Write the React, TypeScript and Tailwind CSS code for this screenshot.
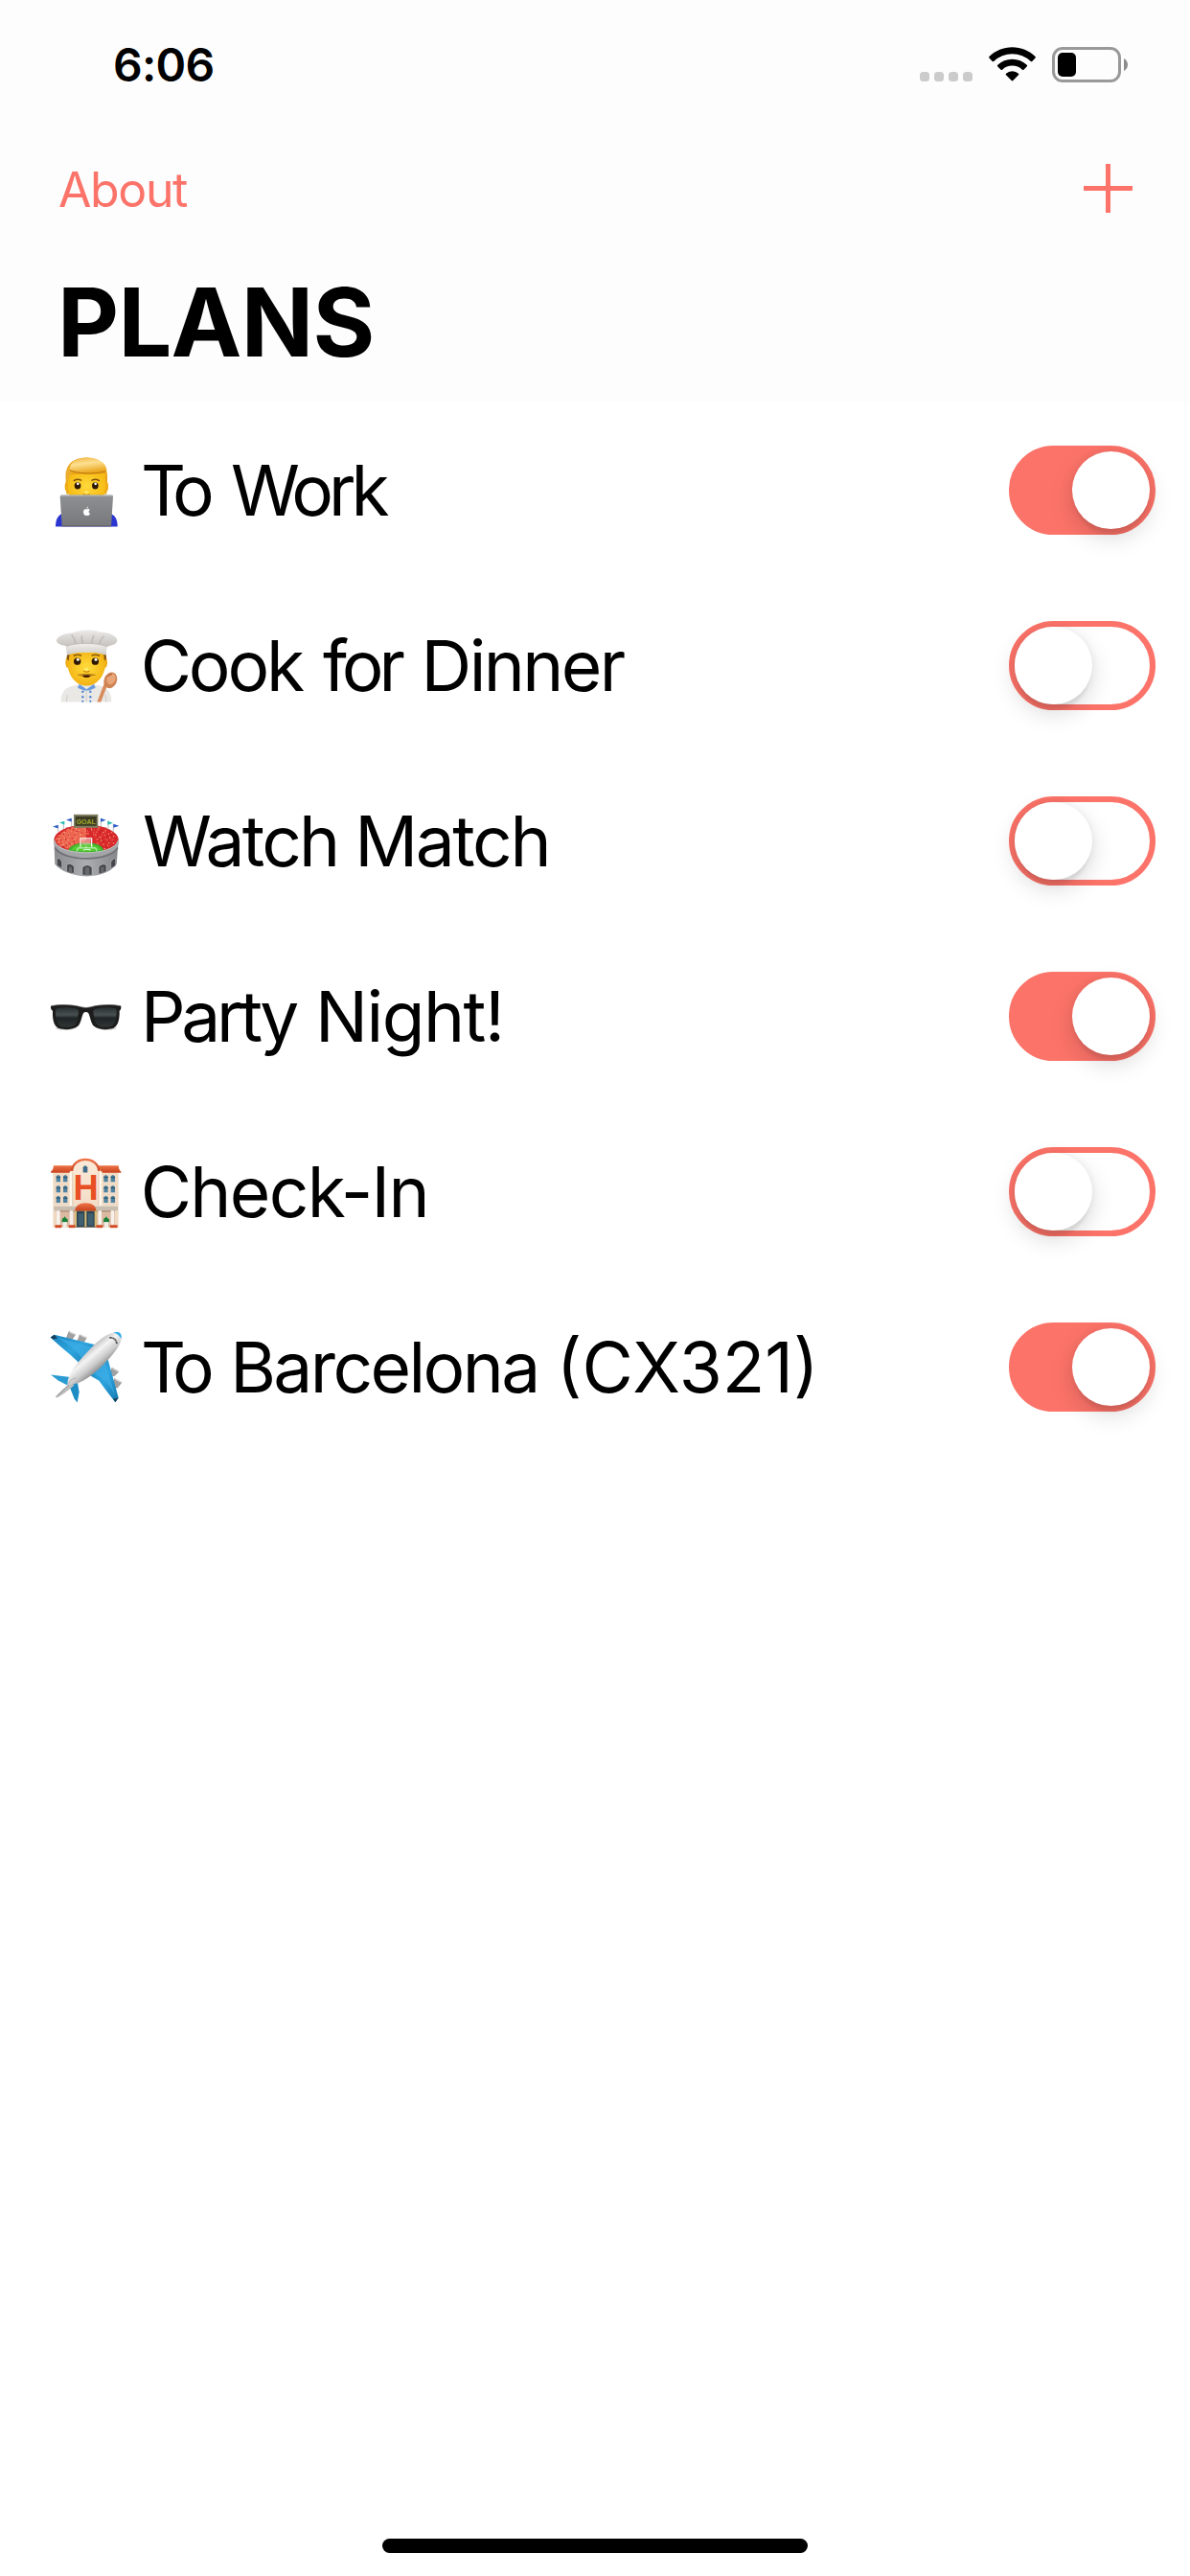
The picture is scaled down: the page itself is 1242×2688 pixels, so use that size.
import React from "react";

function Technologist() {
  return (
    <svg viewBox="60 64.5 240 240" className="size-20 shrink-0">
      <defs>
        <linearGradient id="hair" x1="0" y1="0" x2="0.3" y2="1">
          <stop offset="0" stopColor="#f0b13a" />
          <stop offset="0.45" stopColor="#fde091" />
          <stop offset="1" stopColor="#eaa51b" />
        </linearGradient>
        <radialGradient id="face1" cx="0.5" cy="0.4" r="0.6">
          <stop offset="0" stopColor="#ffd93b" />
          <stop offset="1" stopColor="#f6b70f" />
        </radialGradient>
        <linearGradient id="laptop" x1="0" y1="0" x2="0" y2="1">
          <stop offset="0" stopColor="#8f9092" />
          <stop offset="1" stopColor="#77787b" />
        </linearGradient>
      </defs>
      <path d="M84 297C84 274 92 260 108 256L254 256C270 260 278 275 278 297Z" fill="#2a36cf" />
      <path d="M116 150C113 110 130 82 181 81C232 82 249 110 246 150L244 195L118 195Z" fill="#e9a41a" />
      <ellipse cx="119" cy="172" rx="6" ry="15" fill="#f0ac15" />
      <ellipse cx="243" cy="172" rx="6" ry="15" fill="#f0ac15" />
      <path d="M123 135C150 130 215 135 240 130V178C238 215 210 230 181 230C150 230 125 215 123 178Z" fill="url(#face1)" />
      <path d="M127 121C128 96 149 82 181 81C221 82 243 98 244 121C230 129 205 133 181 131C157 130 140 125 127 121Z" fill="url(#hair)" />
      <path d="M119 160C117 130 120 108 132 99C128 110 126 120 135 126L125 145Z" fill="#edae2c" />
      <path d="M129 121C155 130 195 136 240 124" stroke="#b97208" strokeWidth="3" fill="none" />
      <path d="M142 153Q153 146 164 152M198 152Q209 146 220 153" stroke="#80500c" strokeWidth="4.5" fill="none" strokeLinecap="round" />
      <ellipse cx="153" cy="169" rx="10" ry="11" fill="#2e1804" />
      <ellipse cx="208" cy="169" rx="10" ry="11" fill="#2e1804" />
      <circle cx="154" cy="163" r="4" fill="#fff" />
      <circle cx="209" cy="163" r="4" fill="#fff" />
      <ellipse cx="181" cy="189" rx="8" ry="3" fill="#ffec7a" />
      <path d="M171 194Q181 200 191 194V199H171Z" fill="#a66a10" />
      <path d="M98 203Q98 198 104 198H259Q265 198 264 204L258 296H104Z" fill="url(#laptop)" />
      <path d="M99 200H264" stroke="#bfc0c2" strokeWidth="3" />
      <path d="M104 295H258" stroke="#626367" strokeWidth="3" />
      <path d="M181 243C184 240 190 241 191 245C186 248 187 254 192 256C190 262 187 264 181 262C176 264 172 260 171 252C171 244 175 240 181 243ZM181 241Q181 236 186 234Q187 239 181 241Z" fill="#fff" />
    </svg>
  );
}

function Cook() {
  return (
    <svg viewBox="60 73.5 240 240" className="size-20 shrink-0">
      <defs>
        <linearGradient id="hat" x1="0" y1="0" x2="0" y2="1">
          <stop offset="0" stopColor="#ebeae8" />
          <stop offset="0.6" stopColor="#c9c6c2" />
          <stop offset="1" stopColor="#e2e0dd" />
        </linearGradient>
        <linearGradient id="band" x1="0" y1="0" x2="0" y2="1">
          <stop offset="0" stopColor="#f0efed" />
          <stop offset="1" stopColor="#cfccc7" />
        </linearGradient>
        <radialGradient id="face2" cx="0.5" cy="0.45" r="0.6">
          <stop offset="0" stopColor="#ffdc3c" />
          <stop offset="1" stopColor="#f2ae0e" />
        </radialGradient>
      </defs>
      <path d="M101 306C101 275 110 259 155 252H207C248 259 259 275 259 306Z" fill="#e9e8e5" />
      <path d="M118 306L121 284M243 306L240 284" stroke="#cfccc7" strokeWidth="3" />
      <path d="M158 250L181 266L204 250L209 262L190 270H172L153 262Z" fill="#6d9bdc" />
      <path d="M181 268V306" stroke="#c8c6c4" strokeWidth="2" />
      <g fill="#4a7fd0">
        <circle cx="169" cy="274" r="3.6" />
        <circle cx="193" cy="274" r="3.6" />
        <circle cx="169" cy="290" r="3.6" />
        <circle cx="193" cy="290" r="3.6" />
        <circle cx="169" cy="304" r="3.2" />
        <circle cx="193" cy="304" r="3.2" />
      </g>
      <ellipse cx="122" cy="182" rx="7" ry="17" fill="#eeaa14" />
      <ellipse cx="239" cy="182" rx="7" ry="17" fill="#eeaa14" />
      <path d="M121 150H241V176C242 220 216 255 181 255C146 255 120 220 121 176Z" fill="url(#face2)" />
      <path d="M120 152H128L125 178L119 170ZM242 152H234L237 178L243 170Z" fill="#845311" />
      <path d="M140 162Q152 155 165 161M197 161Q210 155 222 162" stroke="#895a13" strokeWidth="5" fill="none" />
      <ellipse cx="152" cy="179" rx="11" ry="11" fill="#2e1804" />
      <ellipse cx="208" cy="179" rx="11" ry="11" fill="#2e1804" />
      <circle cx="154" cy="173" r="4.5" fill="#fff" />
      <circle cx="210" cy="173" r="4.5" fill="#fff" />
      <path d="M172 209Q181 215 190 209" stroke="#ca8609" strokeWidth="4" fill="none" />
      <ellipse cx="181" cy="204" rx="8" ry="5" fill="#ffe866" />
      <path d="M151 220C161 221 170 215 181 218C192 215 201 221 211 220C204 226 194 224 181 224C168 224 158 226 151 220Z" fill="#b57a17" />
      <path d="M167 224Q181 220 195 224Q181 235 167 224Z" fill="#3a1605" />
      <path d="M86 114C92 96 116 91 139 89C160 80 203 78 221 87C249 86 276 99 277 113C275 130 252 127 244 135L242 158C212 147 150 148 120 158L117 131C105 128 91 127 86 114Z" fill="url(#hat)" />
      <path d="M134 95Q144 107 148 126M166 98Q164 112 170 124M204 97Q198 110 197 124M236 99Q224 110 219 127" stroke="#b3afaa" strokeWidth="5" fill="none" opacity="0.65" />
      <path d="M117 132C145 119 215 120 244 132L242 160C212 146 150 147 120 160Z" fill="url(#band)" />
      <path d="M117 132C145 119 215 120 244 132" stroke="#bcb8b2" strokeWidth="2.5" fill="none" />
      <path d="M248 248L226 306H214L238 244Z" fill="#d98c5c" />
      <ellipse cx="256" cy="238" rx="20" ry="26" transform="rotate(22 256 238)" fill="#d18453" />
      <ellipse cx="258" cy="234" rx="13" ry="18" transform="rotate(22 258 234)" fill="#e8a679" />
      <path d="M248 226Q253 219 261 219" stroke="#b66b40" strokeWidth="4" fill="none" />
    </svg>
  );
}

const CROWD = Array.from({ length: 190 }, (_, i) => {
  const angle = i * 2.399963;
  const radius = Math.sqrt(0.12 + (0.86 * ((i * 37) % 190)) / 190);
  return {
    x: 178 + Math.cos(angle) * 96 * radius,
    y: 164 + Math.sin(angle) * 40 * radius,
    color: ["#f9936d", "#b9101c", "#f7b78e", "#d41f25", "#f4664f"][i % 5],
  };
});

function Stadium() {
  return (
    <svg viewBox="60 52.5 240 240" className="size-20 shrink-0">
      <defs>
        <linearGradient id="wall" x1="0" y1="0" x2="1" y2="0">
          <stop offset="0" stopColor="#8b8c8f" />
          <stop offset="0.5" stopColor="#acadb0" />
          <stop offset="1" stopColor="#85868a" />
        </linearGradient>
      </defs>
      <path d="M92 142V122M109 134V110M134 128V101M226 126V101M249 132V107M265 142V118" stroke="#b9babd" strokeWidth="3" />
      <path d="M92 121L75 126L92 132ZM134 100L117 105L134 111ZM225 100L242 106L225 112ZM265 118L283 124L265 130Z" fill="#2d5cc5" />
      <path d="M112 109L96 114L112 120ZM247 109L264 115L247 121Z" fill="#27b9b6" />
      <path d="M79 165L82 244C100 264 130 280 180 282C230 280 260 265 275 244L281 165Z" fill="url(#wall)" />
      <ellipse cx="180" cy="171" rx="102" ry="51" fill="#a7a8ab" />
      <ellipse cx="180" cy="165" rx="100" ry="44" fill="#d92a2c" />
      <path d="M106 143Q134 121 180 122V168L133 198Q88 187 82 166Z" fill="#ec6650" />
      {CROWD.map((dot, i) => (
        <rect key={i} x={dot.x} y={dot.y} width="3.5" height="3.5" fill={dot.color} />
      ))}
      <path d="M124 203C124 186 150 177 180 177C212 177 235 187 234 203Q180 215 124 203Z" fill="#3fb22d" />
      <path d="M134 199C138 187 157 182 180 182C204 182 221 188 226 199Q180 209 134 199Z" fill="#58cc35" />
      <path d="M79 167C88 221 273 222 281 167L280 185C258 233 104 232 81 185Z" fill="#a4a5a8" />
      <path d="M82 192C105 237 256 238 279 192" stroke="#707176" strokeWidth="5" fill="none" />
      <path d="M80 170C92 220 267 221 280 170" stroke="#c3c4c6" strokeWidth="3" fill="none" />
      <path d="M150 204L154 193H209L214 204M173 202V198H192V202M180 193V187" stroke="#f1fff0" strokeWidth="2.5" fill="none" />
      <path d="M162 190V163H197V190" stroke="#fff" strokeWidth="3.5" fill="none" />
      <path d="M166 166H194V183H166Z" fill="#f5d6ce" opacity="0.55" />
      <g fill="#45464b" stroke="#b7b8bb" strokeWidth="2">
        <path d="M168 278V254Q183 239 198 254V278Z" />
        <path d="M119 268V246Q131 237 142 252V273Z" />
        <path d="M219 275V252Q231 238 243 247V267Z" />
        <path d="M88 248V227Q98 222 104 238V257Z" />
        <path d="M257 258V237Q265 222 272 228V248Z" />
      </g>
      <path d="M176 278V256Q183 249 190 256V278ZM126 270V251L135 254V272ZM226 272V254L235 251V269Z" fill="#68696e" />
      <rect x="141" y="88" width="76" height="42" fill="#807e60" />
      <rect x="146" y="94" width="66" height="30" fill="#3c3c25" />
      <text x="149" y="117" textLength="60" lengthAdjust="spacingAndGlyphs" fill="#a3aa2c" className="font-['Liberation_Sans'] text-[23px] font-bold">GOAL</text>
    </svg>
  );
}

function Sunglasses() {
  return (
    <svg viewBox="60 31.5 240 240" className="size-20 shrink-0">
      <defs>
        <linearGradient id="lens" x1="0" y1="0" x2="0" y2="1">
          <stop offset="0" stopColor="#282e30" />
          <stop offset="0.38" stopColor="#485052" />
          <stop offset="0.55" stopColor="#1f2526" />
          <stop offset="1" stopColor="#303535" />
        </linearGradient>
      </defs>
      <path d="M69 118C94 112 137 112 164 121Q179 125 194 121C220 112 264 112 289 118Q290 130 284 133C285 159 280 179 266 187C246 194 218 193 204 181C194 172 192 147 186 139Q179 134 172 139C166 147 164 172 154 181C140 193 112 194 92 187C78 179 74 159 75 133Q68 130 69 118Z" fill="#1c1c1c" />
      <path d="M91 124Q125 118 151 127Q158 131 155 143C152 166 150 181 132 182Q108 187 96 179C86 169 83 145 84 133Q85 126 91 124Z" fill="url(#lens)" />
      <path d="M208 127Q235 118 268 124Q276 126 275 134C275 151 272 171 262 179Q247 187 225 182C210 179 206 162 203 143Q200 130 208 127Z" fill="url(#lens)" />
      <path d="M70 118C94 112 137 113 164 121Q179 125 194 121C220 113 264 112 288 118" stroke="#5f6060" strokeWidth="2" fill="none" />
      <path d="M84 187Q118 198 149 185M210 185Q241 198 274 187" stroke="#666a62" strokeWidth="2" fill="none" opacity="0.6" />
    </svg>
  );
}

const WINDOWS = [86, 108, 235, 257].flatMap((x) => [106, 139, 171].map((y) => ({ x, y })));

function Hotel() {
  return (
    <svg viewBox="60 40.5 240 240" className="size-20 shrink-0">
      <defs>
        <linearGradient id="roof" x1="0" y1="0" x2="0" y2="1">
          <stop offset="0" stopColor="#ef7447" />
          <stop offset="1" stopColor="#c9421d" />
        </linearGradient>
        <linearGradient id="facade" x1="0" y1="0" x2="0" y2="1">
          <stop offset="0" stopColor="#fbe9d7" />
          <stop offset="1" stopColor="#efd7c0" />
        </linearGradient>
      </defs>
      <rect x="76" y="93" width="205" height="178" fill="#f0dac3" />
      <path d="M78 77H139V100H69V96Q77 91 78 77ZM218 77H281Q282 91 289 96V100H218Z" fill="url(#roof)" />
      <path d="M128 97C137 93 135 67 155 63Q178 50 201 63C221 67 219 93 230 97V271H128Z" fill="url(#facade)" />
      <path d="M135 94C139 46 216 46 220 94" stroke="url(#roof)" strokeWidth="7" fill="none" />
      <path d="M132 99V204M224 99V204" stroke="#fff8ee" strokeWidth="8" />
      <path d="M137 99V204M219 99V204" stroke="#d7bfa9" strokeWidth="2" />
      {WINDOWS.map((w) => (
        <g key={`${w.x}-${w.y}`}>
          <path d={`M${w.x} ${w.y + 23}V${w.y + 5}Q${w.x + 6.5} ${w.y - 4} ${w.x + 13} ${w.y + 5}V${w.y + 23}Z`} fill="#4f82a0" />
          <path d={`M${w.x} ${w.y + 8}H${w.x + 13}`} stroke="#2f5874" strokeWidth="4" />
          <path d={`M${w.x - 1} ${w.y + 24}H${w.x + 14}`} stroke="#fdf3e8" strokeWidth="1.5" />
        </g>
      ))}
      <path d="M170 99V83Q177 72 184 83V99Z" fill="#416b86" />
      <text x="139.5" y="183" fill="#e84f24" className="font-['Liberation_Sans'] text-[109px] font-bold">H</text>
      <rect x="79" y="203" width="200" height="15" fill="#c8bdae" />
      <path d="M79 204H279" stroke="#e5dbce" strokeWidth="3" />
      <rect x="86" y="218" width="184" height="51" fill="#dcb9a1" />
      <path d="M86 220H270" stroke="#a48b7b" strokeWidth="4" />
      <g fill="#f6f1ea">
        <rect x="87" y="218" width="11" height="46" />
        <rect x="128" y="218" width="11" height="46" />
        <rect x="217" y="218" width="11" height="46" />
        <rect x="257" y="218" width="11" height="46" />
      </g>
      <rect x="144" y="216" width="69" height="53" fill="#d8bc75" />
      <path d="M150 219H175V269H150ZM181 219H206V269H181Z" fill="#2e4655" />
      <path d="M155 227H171V265H155ZM186 227H202V265H186Z" fill="#405f70" />
      <path d="M145 219C145 202 160 194 178 194C198 194 211 203 211 219Z" fill="url(#roof)" />
      <g fill="#d24d27">
        <rect x="82" y="263" width="21" height="9" rx="2" />
        <rect x="125" y="263" width="21" height="9" rx="2" />
        <rect x="211" y="263" width="21" height="9" rx="2" />
        <rect x="254" y="263" width="24" height="9" rx="2" />
      </g>
      <path d="M146 270H211" stroke="#7f7165" strokeWidth="3" />
      <path d="M104 254Q103 242 110 241L113 236L117 242Q124 243 122 254ZM234 254Q233 242 240 241L243 236L247 242Q254 243 252 254Z" fill="#178137" />
      <path d="M106 254H120L118 270H108ZM236 254H250L248 270H238Z" fill="#f2efeb" />
    </svg>
  );
}

function Airplane() {
  return (
    <svg viewBox="60 49.5 240 240" className="size-20 shrink-0">
      <defs>
        <linearGradient id="body" x1="0.35" y1="0.35" x2="0.65" y2="0.7">
          <stop offset="0" stopColor="#c2c2c2" />
          <stop offset="0.3" stopColor="#f4f4f4" />
          <stop offset="0.65" stopColor="#c9c9c9" />
          <stop offset="1" stopColor="#7d7d7d" />
        </linearGradient>
        <linearGradient id="wing" x1="0" y1="0" x2="1" y2="1">
          <stop offset="0" stopColor="#1682be" />
          <stop offset="0.5" stopColor="#2fa5de" />
          <stop offset="1" stopColor="#1679b1" />
        </linearGradient>
      </defs>
      <g fill="#a1a1a1" stroke="#777" strokeWidth="1.5">
        <path d="M117 80L126 57L146 66L134 84ZM151 91L160 67L181 76L168 98ZM254 195L261 170L282 182L268 196ZM262 229L269 204L291 216L277 233Z" />
      </g>
      <path d="M128 58L146 66M162 68L181 76M262 171L282 182M270 205L290 216" stroke="#ddd" strokeWidth="4" />
      <path d="M68 75L80 67L215 100L161 158L133 132L101 105L75 82Z" fill="url(#wing)" />
      <path d="M189 193L245 133L281 264L271 278L243 242L220 211Z" fill="url(#wing)" />
      <path d="M87 74L205 109L170 146Q147 108 87 74Z" fill="#41b1ea" opacity="0.6" />
      <path d="M238 150L270 255Q249 211 204 188Z" fill="#41b1ea" opacity="0.6" />
      <path d="M68 75L80 67L90 78L76 81ZM264 267L281 264L271 278Z" fill="#17425b" />
      <path d="M69 192L136 200L121 225L92 210Z" fill="#2b9bd3" />
      <path d="M126 225L151 208L158 246L152 279L143 268Z" fill="#1f8dc5" />
      <path d="M132 218Q107 235 83 261L88 264Q115 250 143 224Z" fill="#bcbcbc" />
      <path d="M88 261Q115 232 143 208" stroke="#777" strokeWidth="2" fill="none" />
      <path d="M121 224C120 189 155 150 190 114C218 82 250 58 278 59Q292 62 290 79C286 108 250 145 220 174C183 207 154 224 121 224Z" fill="url(#body)" />
      <path d="M266 60Q291 52 291 78Q286 77 282 70Q276 62 266 60Z" fill="#36afe7" />
      <path d="M253 76Q272 75 276 95" stroke="#4b4b4b" strokeWidth="5" strokeDasharray="7 1.5" fill="none" />
      <path d="M125 221Q128 207 148 202" stroke="#999" strokeWidth="2" fill="none" />
    </svg>
  );
}

function StatusIcons() {
  return (
    <div className="flex h-[120px] items-start pt-[49px]">
      <div className="mt-[26px] flex gap-[5px]">
        {[0, 1, 2, 3].map((i) => (
          <span key={i} className="size-[10px] rounded-[3.5px] bg-[#cbcbcb]" />
        ))}
      </div>
      <svg viewBox="0 0 49 36" className="ml-[17px] h-9 w-[49px]" fill="#000">
        <path d="M24.5 0.2C33.6 0.2 42 3.6 48.5 10Q49.3 10.8 48.5 11.6L45.3 14.9Q44.6 15.6 43.8 14.9A28 28 0 0 0 5.2 14.9Q4.4 15.6 3.7 14.9L0.5 11.6Q-0.3 10.8 0.5 10C7 3.6 15.4 0.2 24.5 0.2Z" />
        <path d="M24.5 12.7C30.3 12.7 35.7 14.9 39.7 18.8Q40.5 19.6 39.7 20.4L36.4 23.7Q35.7 24.4 34.9 23.7A15.3 15.3 0 0 0 14.1 23.7Q13.3 24.4 12.6 23.7L9.3 20.4Q8.5 19.6 9.3 18.8C13.3 14.9 18.7 12.7 24.5 12.7Z" />
        <path d="M24.5 25.2Q28.3 25.2 31 27.7Q31.8 28.5 31 29.3L25.3 35Q24.5 35.8 23.7 35L18 29.3Q17.2 28.5 18 27.7Q20.7 25.2 24.5 25.2Z" />
      </svg>
      <div className="ml-[17px] flex h-[37px] w-[72px] rounded-[11px] border-[3px] border-[#999] p-[3px]">
        <span className="h-[25px] w-[19px] rounded-[5px] bg-black" />
      </div>
      <svg viewBox="0 0 4 13" className="mt-3 ml-[3px] h-[13px] w-1" fill="#8c8c8c">
        <path d="M0 0Q4 2.5 4 6.5Q4 10.5 0 13Z" />
      </svg>
    </div>
  );
}

function Toggle({ on }: { on: boolean }) {
  return (
    <button
      role="switch"
      aria-checked={on}
      className={`flex h-[93px] w-[153px] rounded-full border-[6px] border-[#fc7369] ${on ? "justify-end bg-[#fc7369]" : "justify-start bg-white"}`}
    >
      <span className="size-[81px] rounded-full bg-white shadow-[0_9px_24px_rgba(0,0,0,0.15),0_9px_3px_-3px_rgba(0,0,0,0.06),0_0_9px_rgba(0,0,0,0.06)]" />
    </button>
  );
}

type Word = [text: string, spacing: string];

const PLANS: { icon: React.ReactNode; on: boolean; words: Word[] }[] = [
  {
    icon: <Technologist />,
    on: true,
    words: [["To", "ml-[1px] tracking-[-8.4px]"], ["Work", "ml-[5.6px] tracking-[-5px]"]],
  },
  {
    icon: <Cook />,
    on: false,
    words: [
      ["Cook", "ml-[0.7px] tracking-[-3.2px]"],
      ["for", "ml-[2.1px] tracking-[-5px]"],
      ["Dinner", "ml-[1.5px] tracking-[-2.6px]"],
    ],
  },
  {
    icon: <Stadium />,
    on: false,
    words: [["Watch", "ml-[3px] tracking-[-2.75px]"], ["Match", "ml-[-2.3px] tracking-[-2.4px]"]],
  },
  {
    icon: <Sunglasses />,
    on: true,
    words: [["Party", "ml-[1px] tracking-[-4.3px]"], ["Night!", "ml-[0.9px] tracking-[-1.5px]"]],
  },
  { icon: <Hotel />, on: false, words: [["Check-In", "ml-[0.7px] tracking-[-1.7px]"]] },
  {
    icon: <Airplane />,
    on: true,
    words: [
      ["To", "ml-[1px] tracking-[-8.4px]"],
      ["Barcelona", "ml-[4.8px] tracking-[-2.6px]"],
      ["(CX321)", "ml-[-0.9px]"],
    ],
  },
];

export default function App() {
  return (
    <div className="flex h-[2688px] w-[1242px] flex-col bg-white font-['Inter',sans-serif] text-black">
      <header className="flex h-[420px] flex-col bg-[#fdfdfd]">
        <div className="flex h-[132px] justify-between pr-[65px] pl-[118px]">
          <time className="mt-[38px] text-[48px] leading-[60px] font-semibold tracking-[-0.7px]">6:06</time>
          <StatusIcons />
        </div>
        <nav className="flex h-[132px] items-center justify-between pr-[60px] pl-[61px] text-[#fc7369]">
          <button className="text-[50px] leading-[60px] tracking-[-1.4px]">About</button>
          <button aria-label="Add plan" className="pb-[3px]">
            <svg viewBox="0 0 51 51" className="size-[51px]" stroke="currentColor" strokeWidth="5">
              <path d="M25.5 0V51M0 25.5H51" />
            </svg>
          </button>
        </nav>
        <h1 className="mt-3 pl-[60px] text-[99px] leading-[120px] font-bold tracking-[-0.75px]">PLANS</h1>
      </header>
      <main className="flex-1">
        <ul>
          {PLANS.map((plan, i) => (
            <li key={i} className="flex h-[183px] items-center pr-9 pl-[50px]">
              {plan.icon}
              <p className="ml-4 flex flex-1 gap-5 text-[73px] leading-[90px] whitespace-nowrap">
                {plan.words.map(([text, spacing]) => (
                  <span key={text} className={spacing}>{text}</span>
                ))}
              </p>
              <Toggle on={plan.on} />
            </li>
          ))}
        </ul>
      </main>
      <footer className="flex h-[39px] justify-center">
        <div className="h-[15px] w-[444px] rounded-full bg-black" />
      </footer>
    </div>
  );
}
